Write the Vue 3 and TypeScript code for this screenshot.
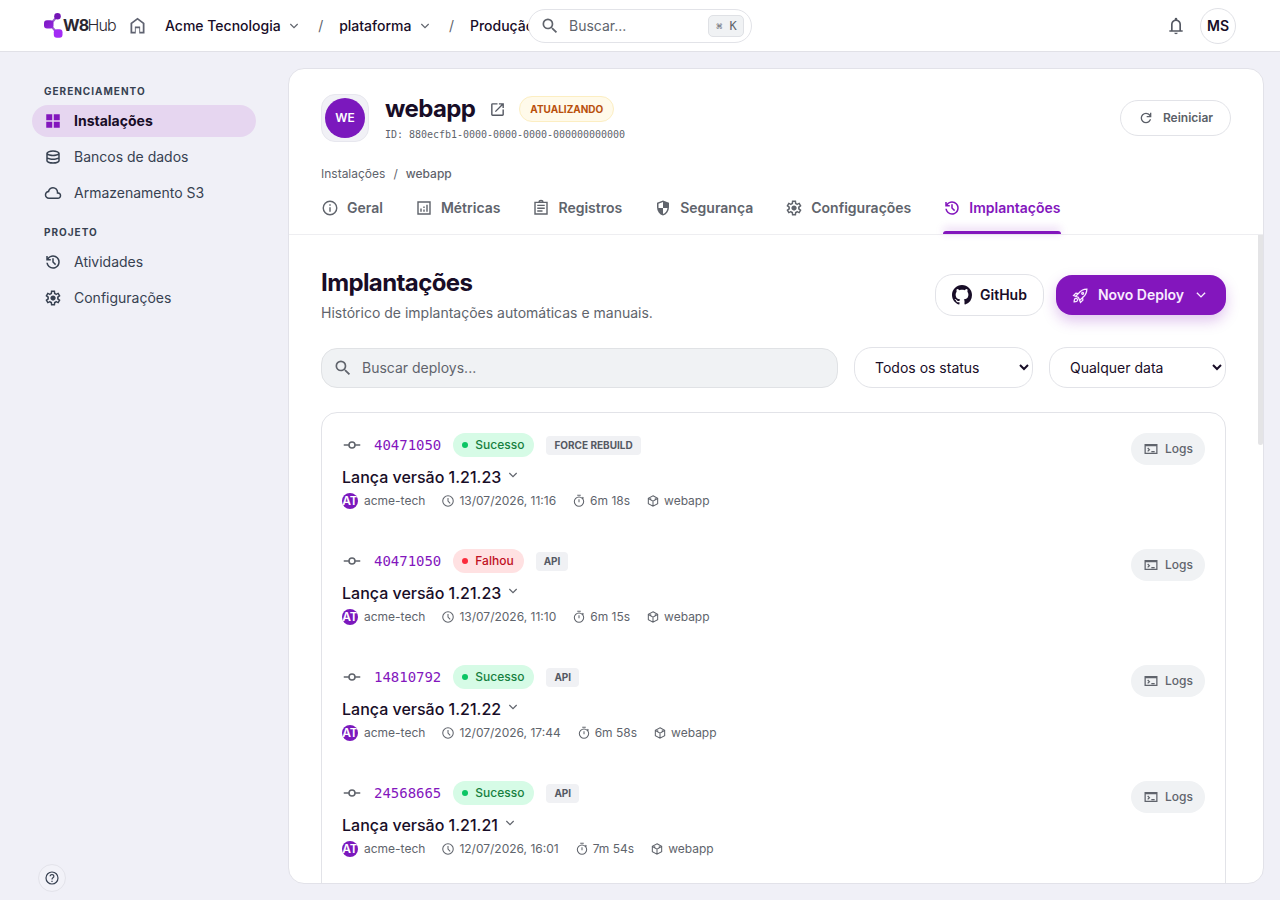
<script setup lang="ts">
import { h, type FunctionalComponent } from 'vue'

type Shape = { d: string; stroke?: boolean; width?: number }

const shapes: Record<string, Shape> = {
  home: { d: 'M6 19h3v-6h6v6h3v-9l-6-4.5L6 10v9zm-2 2V9l8-6 8 6v12h-6v-6h-4v6H4z' },
  search: { d: 'M15.5 14h-.79l-.28-.27A6.471 6.471 0 0 0 16 9.5 6.5 6.5 0 1 0 9.5 16c1.61 0 3.09-.59 4.23-1.57l.27.28v.79l5 4.99L20.49 19l-4.99-5zm-6 0C7.01 14 5 11.99 5 9.5S7.01 5 9.5 5 14 7.01 14 9.5 11.99 14 9.5 14z' },
  bell: { d: 'M4 19v-2h2v-7q0-2.075 1.25-3.687T10.5 4.2v-.7q0-.625.438-1.062T12 2t1.063.438T13.5 3.5v.7q2 .5 3.25 2.113T18 10v7h2v2zm8 3q-.825 0-1.412-.587T10 20h4q0 .825-.587 1.413T12 22m-4-5h8v-7q0-1.65-1.175-2.825T12 6T9.175 7.175T8 10z' },
  chevron: { d: 'M6.500 9l5.500 5.500L17.500 9', stroke: true, width: 1.8 },
  grid: { d: 'M3 11V3h8v8zm0 10v-8h8v8zm10-10V3h8v8zm0 10v-8h8v8z' },
  database: { d: 'M12 21q-3.775 0-6.387-1.162T3 17V7q0-1.65 2.638-2.825T12 3t6.363 1.175T21 7v10q0 1.675-2.613 2.838T12 21m0-11.975q2.225 0 4.475-.638T19 7.025q-.275-.725-2.512-1.375T12 5q-2.275 0-4.462.638T5 7.025q.35.75 2.538 1.375T12 9.025M12 14q1.05 0 2.025-.1t1.863-.288t1.675-.462T19 12.525v-3q-.65.35-1.437.625t-1.675.463t-1.863.287T12 11t-2.05-.1t-1.888-.288T6.4 10.15T5 9.525v3q.6.35 1.4.625t1.663.463t1.887.287T12 14m0 5q1.15 0 2.338-.175t2.187-.462t1.675-.65t.8-.738v-2.45q-.65.35-1.437.625t-1.675.463t-1.863.287T12 16t-2.05-.1t-1.888-.288T6.4 15.15T5 14.525V17q.125.375.788.725t1.662.638t2.2.462T12 19' },
  cloud: { d: 'M6.5 20q-2.275 0-3.887-1.575T1 14.575q0-1.95 1.175-3.475T5.25 9.15q.625-2.3 2.5-3.725T12 4q2.925 0 4.963 2.038T19 11q1.725.2 2.863 1.488T23 15.5q0 1.875-1.312 3.188T18.5 20zm0-2h12q1.05 0 1.775-.725T21 15.5t-.725-1.775T18.5 13H17v-2q0-2.075-1.463-3.538T12 6T8.463 7.463T7 11h-.5q-1.45 0-2.475 1.025T3 14.5t1.025 2.475T6.5 18' },
  history: { d: 'M12 21q-3.45 0-6.012-2.287T3.05 13H5.1q.35 2.6 2.313 4.3T12 19q2.925 0 4.963-2.037T19 12t-2.037-4.962T12 5q-1.725 0-3.225.8T6.25 8H9v2H3V4h2v2.35q1.275-1.6 3.113-2.475T12 3q1.875 0 3.513.713t2.85 1.924t1.925 2.85T21 12t-.712 3.513t-1.925 2.85t-2.85 1.925T12 21m2.8-4.8L11 12.4V7h2v4.6l3.2 3.2z' },
  settings: { d: 'M9.25 22l-.4-3.2q-.325-.125-.612-.3t-.563-.375L4.7 19.375l-2.75-4.75l2.575-1.95Q4.5 12.5 4.5 12.338v-.675q0-.163.025-.338L1.95 9.375l2.75-4.75l2.975 1.25q.275-.2.575-.375t.6-.3l.4-3.2h5.5l.4 3.2q.325.125.613.3t.562.375l2.975-1.25l2.75 4.75l-2.575 1.95q.025.175.025.338v.674q0 .163-.05.338l2.575 1.95l-2.75 4.75l-2.95-1.25q-.275.2-.575.375t-.6.3l-.4 3.2zM11 20h1.975l.35-2.65q.775-.2 1.438-.587t1.212-.938l2.475 1.025l.975-1.7l-2.15-1.625q.125-.35.175-.737T17.5 12t-.05-.787t-.175-.738l2.15-1.625l-.975-1.7l-2.475 1.05q-.55-.575-1.212-.962t-1.438-.588L13 4h-1.975l-.35 2.65q-.775.2-1.437.588t-1.213.937L5.55 7.15l-.975 1.7l2.15 1.6q-.125.375-.175.75t-.05.8q0 .4.05.775t.175.75l-2.15 1.625l.975 1.7l2.475-1.05q.55.575 1.213.963t1.437.587zm1.05-4.5q1.45 0 2.475-1.025T15.55 12t-1.025-2.475T12.05 8.5q-1.475 0-2.487 1.025T8.55 12t1.013 2.475T12.05 15.5' },
  external: { d: 'M5 21q-.825 0-1.412-.587T3 19V5q0-.825.588-1.412T5 3h7v2H5v14h14v-7h2v7q0 .825-.587 1.413T19 21zm4.7-5.3l-1.4-1.4L17.6 5H14V3h7v7h-2V6.4z' },
  refresh: { d: 'M12 20q-3.35 0-5.675-2.325T4 12t2.325-5.675T12 4q1.725 0 3.3.713T18 6.75V4h2v7h-7V9h4.2q-.8-1.4-2.187-2.2T12 6Q9.5 6 7.75 7.75T6 12t1.75 4.25T12 18q1.925 0 3.475-1.1T17.65 14h2.1q-.7 2.65-2.85 4.325T12 20' },
  info: { d: 'M12 3a9 9 0 1 0 0 18 9 9 0 0 0 0-18zM12 11v6M12 7v2', stroke: true, width: 1.9 },
  chart: { d: 'M4 4h16v16H4zM8 12.5V17M12 14v3M12 10v2M16 7.5V17', stroke: true, width: 1.9 },
  clipboard: { d: 'M4 4.5h16V20H4zM7 8.5h10M7 12.3h10M7 16h7M9.5 4.3a2.5 2.2 0 0 1 5 0', stroke: true, width: 1.9 },
  shield: { d: 'M12 22q-3.475-.875-5.738-3.988T4 11.1V5l8-3l8 3v6.1q0 3.8-2.262 6.913T12 22m0-2.1q2.425-.75 4.05-2.963T17.95 12H12V4.125l-6 2.25v5.175q0 .175.05.45H12z' },
  commit: { d: 'M1 12h7M16 12h7M12 8a4 4 0 1 0 0 8 4 4 0 0 0 0-8z', stroke: true, width: 2.1 },
  clock: { d: 'M12 3a9 9 0 1 0 0 18 9 9 0 0 0 0-18zM12 7v5.2l3.7 3.7', stroke: true, width: 1.8 },
  timer: { d: 'M12 5a8 8 0 1 0 0 16 8 8 0 0 0 0-16zM12 9v5M9 2h6M18 5.5l1.8 1.8', stroke: true, width: 1.8 },
  cube: { d: 'M12 3l8 4.5v9L12 21l-8-4.5v-9zM4.3 7.7L12 12.2l7.7-4.5M12 12v9M8 7.3v3M16 7.3v3', stroke: true, width: 1.8 },
  terminal: { d: 'M3.200 5.500h17.600v13H3.200zM3.200 6.800h17.600M7 10.4l2.6 2.6L7 15.6M12.5 15.800H17.500', stroke: true, width: 1.9 },
  help: { d: 'M12 3a9 9 0 1 0 0 18 9 9 0 0 0 0-18zM9.2 9.4a2.8 2.6 0 1 1 4.2 2.3Q12 12.7 12 14.2M12 16v2', stroke: true, width: 1.8 },
  rocket: { d: 'M9 14.7L5.2 13 9 9.2Q13.5 3.2 21 3q-.2 7.5-6.2 12L11 18.8zM9.3 9.2L5.5 8.6 2.2 12l4 1.7M14.8 14.7l.6 3.8-3.4 3.3-1.7-4M15 7.7a1.3 1.3 0 1 0 .1 0M3 21q0-4.5 2.2-4.8Q8.200 16 7.800 19 7.300 21 3 21z', stroke: true, width: 1.8 },
}

// Renders one glyph from the table above, in the current text colour.
const Icon: FunctionalComponent<{ name: string; size: number }> = (p) => {
  const s = shapes[p.name]
  return h('svg', { width: p.size, height: p.size, viewBox: '0 0 24 24', 'aria-hidden': 'true' }, [
    h('path', s.stroke
      ? { d: s.d, fill: 'none', stroke: 'currentColor', 'stroke-width': s.width }
      : { d: s.d, fill: 'currentColor' }),
  ])
}
Icon.props = ['name', 'size']

const groups = [
  { title: 'Gerenciamento', items: [
    { icon: 'grid', label: 'Instalações', active: true },
    { icon: 'database', label: 'Bancos de dados', active: false },
    { icon: 'cloud', label: 'Armazenamento S3', active: false },
  ] },
  { title: 'Projeto', items: [
    { icon: 'history', label: 'Atividades', active: false },
    { icon: 'settings', label: 'Configurações', active: false },
  ] },
]

const tabs = [
  { icon: 'info', label: 'Geral' },
  { icon: 'chart', label: 'Métricas' },
  { icon: 'clipboard', label: 'Registros' },
  { icon: 'shield', label: 'Segurança' },
  { icon: 'settings', label: 'Configurações' },
  { icon: 'history', label: 'Implantações', active: true },
]

const deploys = [
  { hash: '40471050', ok: true, tag: 'FORCE REBUILD', version: '1.21.23', date: '13/07/2026, 11:16', time: '6m 18s' },
  { hash: '40471050', ok: false, tag: 'API', version: '1.21.23', date: '13/07/2026, 11:10', time: '6m 15s' },
  { hash: '14810792', ok: true, tag: 'API', version: '1.21.22', date: '12/07/2026, 17:44', time: '6m 58s' },
  { hash: '24568665', ok: true, tag: 'API', version: '1.21.21', date: '12/07/2026, 16:01', time: '7m 54s' },
]
</script>

<template>
  <div class="app">
    <header class="topbar">
      <div class="logo">
        <svg width="20" height="28" viewBox="0 0 20 28">
          <defs>
            <linearGradient id="brand" x1="0" y1="0" x2="1" y2="1">
              <stop offset="0" stop-color="#7a18c0" />
              <stop offset="1" stop-color="#9526e0" />
            </linearGradient>
          </defs>
          <path d="M12.500 5 8 10.500M8 15l5 6" stroke="#9b5fd0" stroke-width="2" fill="none" />
          <circle cx="13.500" cy="4.300" r="3.300" fill="#7415b5" />
          <rect x="0" y="8.300" width="9.500" height="8.300" rx="3" fill="url(#brand)" />
          <rect x="9.800" y="17.300" width="8.700" height="8.500" rx="3" fill="#a32cf5" />
        </svg>
        <strong>W8</strong><span>Hub</span>
      </div>
      <Icon class="home" name="home" :size="21" />
      <nav class="crumbs">
        <span>Acme Tecnologia</span><Icon class="caret" name="chevron" :size="16" />
        <i>/</i>
        <span>plataforma</span><Icon class="caret" name="chevron" :size="16" />
        <i>/</i>
        <span>Produção</span>
      </nav>
      <div class="global-search">
        <Icon name="search" :size="20" />
        <span>Buscar...</span>
        <kbd><b>⌘</b> K</kbd>
      </div>
      <Icon class="bell" name="bell" :size="20" />
      <div class="user">MS</div>
    </header>

    <div class="body">
      <aside>
        <section v-for="g in groups" :key="g.title">
          <h4>{{ g.title }}</h4>
          <a v-for="i in g.items" :key="i.label" :class="{ active: i.active }">
            <Icon :name="i.icon" :size="18" /><span>{{ i.label }}</span>
          </a>
        </section>
        <button class="help"><Icon name="help" :size="16" /></button>
      </aside>

      <main>
        <div class="head">
          <div class="app-row">
            <div class="app-icon"><span>WE</span></div>
            <div class="app-info">
              <div class="name-row">
                <h1>webapp</h1>
                <Icon name="external" :size="17" />
                <span class="state">ATUALIZANDO</span>
              </div>
              <div class="uid">ID: 880ecfb1-0000-0000-0000-000000000000</div>
            </div>
            <button class="restart"><Icon name="refresh" :size="16" />Reiniciar</button>
          </div>
          <div class="path"><span>Instalações</span><span>/</span><b>webapp</b></div>
          <nav class="tabs">
            <a v-for="t in tabs" :key="t.label" :class="{ on: t.active }">
              <Icon :name="t.icon" :size="18" />{{ t.label }}
            </a>
          </nav>
        </div>

        <div class="content">
          <div class="title-row">
            <div>
              <h2>Implantações</h2>
              <p>Histórico de implantações automáticas e manuais.</p>
            </div>
            <button class="github">
              <svg width="20" height="20" viewBox="0 0 16 16"><path fill="currentColor" d="M8 0C3.580 0 0 3.580 0 8c0 3.540 2.290 6.530 5.470 7.590.4.070.550-.170.550-.380 0-.190-.010-.820-.010-1.490-2.010.370-2.530-.490-2.690-.940-.090-.230-.480-.940-.820-1.130-.280-.150-.680-.520-.010-.530.630-.010 1.080.580 1.230.820.720 1.210 1.870.870 2.330.660.070-.520.280-.870.510-1.070-1.780-.2-3.640-.890-3.640-3.950 0-.870.310-1.590.820-2.150-.080-.2-.360-1.020.080-2.120 0 0 .670-.210 2.200.820.640-.180 1.320-.270 2-.270s1.360.090 2 .270c1.530-1.040 2.200-.820 2.200-.820.440 1.100.160 1.920.080 2.120.510.560.820 1.270.820 2.150 0 3.070-1.870 3.750-3.650 3.950.290.250.540.730.540 1.480 0 1.070-.010 1.930-.010 2.200 0 .210.150.460.550.380A8.010 8.010 0 0 0 16 8c0-4.420-3.580-8-8-8z" /></svg>
              GitHub
            </button>
            <button class="deploy">
              <Icon name="rocket" :size="17" /><span>Novo Deploy</span><Icon name="chevron" :size="18" />
            </button>
          </div>

          <div class="filters">
            <div class="field"><Icon name="search" :size="20" /><span>Buscar deploys...</span></div>
            <select class="status"><option>Todos os status</option></select>
            <select class="date"><option>Qualquer data</option></select>
          </div>

          <div class="list">
            <article v-for="(d, n) in deploys" :key="n">
              <div class="entry">
                <div class="line">
                  <Icon class="commit" name="commit" :size="18" />
                  <code>{{ d.hash }}</code>
                  <span class="badge" :class="{ bad: !d.ok }">{{ d.ok ? 'Sucesso' : 'Falhou' }}</span>
                  <span class="tag">{{ d.tag }}</span>
                </div>
                <div class="version">Lança versão {{ d.version }}<Icon name="chevron" :size="16" /></div>
                <div class="meta">
                  <span class="who"><em>AT</em>acme-tech</span>
                  <span><Icon name="clock" :size="14" />{{ d.date }}</span>
                  <span><Icon name="timer" :size="14" />{{ d.time }}</span>
                  <span><Icon name="cube" :size="14" />webapp</span>
                </div>
              </div>
              <button class="logs"><Icon name="terminal" :size="16" />Logs</button>
            </article>
          </div>
          <div class="thumb"></div>
        </div>
      </main>
    </div>
  </div>
</template>

<style>
body { margin: 0; background: #f0f0f7; overflow: hidden; }
</style>

<style scoped>
* { box-sizing: border-box; }
.app { width: 1280px; height: 900px; overflow: hidden; display: flex; flex-direction: column; background: #f0f0f7; color: #180d27; font: 400 14px/20px Inter, "Noto Sans", sans-serif; }
svg { flex: none; display: block; }
h1, h2, h4, p { margin: 0; }
button { font: inherit; color: inherit; background: none; border: 0; padding: 0; display: flex; align-items: center; }
.topbar { position: relative; flex: none; height: 52px; background: #fff; border-bottom: 1px solid #e1e1e7; display: flex; align-items: center; padding: 0 44px; }
.logo { width: 73px; height: 28px; display: flex; align-items: center; color: #2b2731; font-size: 16px; line-height: 22px; white-space: nowrap; }
.logo strong { width: 24.5px; margin: 0 0 2px -1px; font-weight: 700; letter-spacing: -.9px; }
.logo span { margin-bottom: 2px; font-weight: 300; letter-spacing: -.9px; }
.home { margin-left: 10px; color: #5f6270; }
.crumbs { margin-left: 17px; display: flex; align-items: center; font-weight: 500; white-space: nowrap; }
.crumbs i { font-style: normal; font-weight: 400; color: #60646c; width: 37px; text-align: center; }
.caret { margin-left: 5.5px; color: #60646c; }
.global-search { position: absolute; left: 528px; top: 9px; width: 224px; height: 34px; border: 1px solid #e2e3e8; border-radius: 17px; background: #fff; color: #60646c; display: flex; align-items: center; padding: 0 7px 0 11px; }
.global-search span { margin-left: 9px; flex: 1; }
kbd { width: 36px; height: 22px; border: 1px solid #dfe1e5; border-radius: 5px; background: #f0f2f4; font: 12px/20px "DejaVu Sans Mono", monospace; text-align: center; padding-left: 1px; }
kbd b { font-weight: 400; font-size: 10px; }
.bell { margin-left: auto; color: #555963; }
.user { margin-left: 14px; width: 36px; height: 36px; border: 1px solid #e0e1e6; border-radius: 50%; text-align: center; line-height: 34px; font-weight: 600; }
.body { flex: 1; min-height: 0; display: flex; }
aside { position: relative; width: 288px; padding: 32px; color: #374151; }
aside h4 { height: 16px; padding-left: 12px; font-size: 10px; line-height: 15px; font-weight: 700; letter-spacing: 1px; text-transform: uppercase; margin-bottom: 5px; }
aside section + section { margin-top: 16px; }
aside a { height: 32px; border-radius: 16px; padding-left: 12px; display: flex; align-items: center; gap: 12px; margin-bottom: 4px; }
aside a.active { background: #e6d6f0; color: #180d27; font-weight: 700; }
aside a.active svg { color: #8316bd; }
.help { position: absolute; left: 38px; bottom: 8px; width: 28px; height: 28px; border: 1px solid #e3e3ea; border-radius: 50%; background: #f2f2f8; justify-content: center; }
main { width: 976px; height: 816px; margin-top: 16px; background: #fff; border: 1px solid #e2e2e9; border-radius: 16px; overflow: hidden; display: flex; flex-direction: column; }
.head { flex: none; height: 166px; padding: 25px 32px 0; border-bottom: 1px solid #eeeef1; }
.app-row { display: flex; height: 48px; }
.app-icon { width: 48px; height: 48px; border: 1px solid #e7e7ee; border-radius: 14px; background: #f1f1f6; padding: 3px; }
.app-icon span { display: block; height: 40px; border-radius: 50%; background: #7b18bd; color: #fff; text-align: center; font: 600 12px/40px Inter, sans-serif; }
.app-info { margin-left: 16px; flex: 1; }
.name-row { height: 30px; display: flex; align-items: center; color: #555963; }
h1 { font-size: 24px; line-height: 30px; font-weight: 700; letter-spacing: -.6px; color: #180d27; margin-right: 14px; }
.state { margin-left: 13px; height: 26px; padding: 0 10px; border: 1px solid #fceec2; border-radius: 13px; background: #fffaea; color: #b9500c; font-weight: 700; font-size: 10px; line-height: 24px; }
.uid { margin-top: 4px; font: 10px/14px "DejaVu Sans Mono", monospace; letter-spacing: -.02px; color: #60646c; }
.restart { margin-top: 6px; width: 111px; height: 36px; border: 1px solid #e2e3e8; border-radius: 18px; justify-content: center; gap: 9px; color: #5b5f68; font-size: 12px; font-weight: 600; }
.path { margin-top: 23px; display: flex; gap: 8px; font-size: 12px; line-height: 18px; color: #5f636c; }
.path b { font-weight: 500; }
.tabs { margin-top: 6px; display: flex; gap: 32px; height: 44px; font-weight: 600; color: #60646c; }
.tabs a { position: relative; display: flex; align-items: center; gap: 8px; height: 37px; }
.tabs .on { color: #8316bd; }
.tabs .on::after { content: ""; position: absolute; left: 0; right: 0; top: 42px; height: 3px; border-radius: 3px 3px 0 0; background: #8316bd; box-shadow: 0 -2px 8px #8316bd55; }
.content { position: relative; flex: 1; min-height: 0; overflow: hidden; padding: 32px 37px 0 32px; }
.title-row { display: flex; align-items: center; height: 56px; }
.title-row > div { flex: 1; }
h2 { font-size: 24px; line-height: 32px; font-weight: 700; letter-spacing: -.6px; }
p { margin-top: 4px; line-height: 20px; color: #60646c; }
.github { width: 109px; height: 42px; border: 1px solid #e2e3e8; border-radius: 18px; justify-content: center; gap: 8px; font-weight: 600; }
.deploy { margin-left: 12px; width: 170px; height: 40px; border-radius: 16px; background: #8316bd; color: #f8ecff; font-weight: 600; justify-content: center; box-shadow: 0 6px 14px #8316bd40; }
.deploy span { margin: 0 8px 0 9px; }
.filters { margin-top: 24px; display: flex; gap: 16px; align-items: center; height: 41px; }
.field { flex: 1; height: 40px; border: 1px solid #e0e2e5; border-radius: 16px; background: #f0f2f4; display: flex; align-items: center; padding-left: 11px; gap: 9px; color: #60646c; }
select { height: 41px; border: 1px solid #e2e3e8; border-radius: 18px; background: #fff; color: #180d27; font: 400 14px/20px Inter, sans-serif; padding: 0 0 0 16px; }
.status { width: 179px; }
.date { width: 177px; }
.list { margin-top: 24px; height: 600px; border: 1px solid #e2e3e8; border-radius: 16px; }
article { height: 116px; padding: 20px; display: flex; justify-content: space-between; }
.line { display: flex; align-items: center; height: 24px; }
.commit { margin-left: 1px; color: #60646c; }
code { margin: 0 12px 0 13px; font: 14px/20px "DejaVu Sans Mono", monospace; letter-spacing: -.02px; color: #8316bd; }
.badge { height: 24px; border-radius: 12px; padding: 0 10px 0 9px; display: flex; align-items: center; background: #d6fbe6; color: #16803f; font-size: 12px; font-weight: 500; }
.badge::before { content: ""; width: 6px; height: 6px; border-radius: 50%; background: #0bc564; margin-right: 7px; }
.badge.bad { background: #ffe1e2; color: #c00f22; }
.badge.bad::before { background: #fb2b3c; }
.tag { margin-left: 12px; height: 19px; border-radius: 4px; padding: 0 8px; background: #f0f1f4; color: #555963; font-size: 10px; line-height: 19px; font-weight: 700; }
.version { margin-top: 8px; display: flex; align-items: center; font-size: 16px; line-height: 24px; font-weight: 500; }
.version svg { margin: -4px 0 0 4px; color: #60646c; }
.meta { margin-top: 4px; display: flex; gap: 16px; font-size: 12px; line-height: 16px; color: #60646c; white-space: nowrap; }
.meta span { display: flex; align-items: center; gap: 4px; }
.meta .who { gap: 6px; }
em { width: 16px; height: 16px; border-radius: 50%; background: #7b18bd; color: #fff; font-style: normal; font-weight: 600; overflow: hidden; display: flex; justify-content: center; }
.logs { width: 74px; height: 32px; border-radius: 16px; background: #f0f2f4; color: #60646c; justify-content: center; gap: 6px; font-size: 12px; font-weight: 500; }
.thumb { position: absolute; right: 0; top: 0; width: 5px; height: 210px; border-radius: 0 0 3px 3px; background: #e4e4e6; }
</style>
